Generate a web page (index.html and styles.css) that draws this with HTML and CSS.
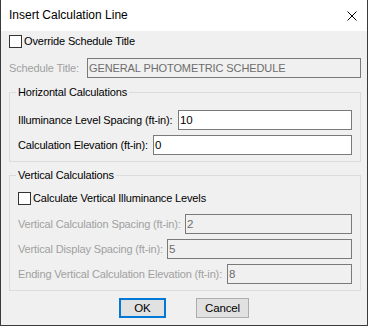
FILE: index.html
```html
<!DOCTYPE html>
<html>
<head>
<meta charset="utf-8">
<link rel="stylesheet" href="styles.css">
</head>
<body>
<div class="window">
  <div class="titlebar">
    <span class="title">Insert Calculation Line</span>
    <svg class="close" width="10" height="10" viewBox="0 0 10 10"><path d="M0.5 0.5 L9.5 9.5 M9.5 0.5 L0.5 9.5" stroke="#000" stroke-width="1" fill="none"/></svg>
  </div>
  <div class="content">
    <div class="check-row first">
      <span class="checkbox"></span>
      <span class="check-label">Override Schedule Title</span>
    </div>
    <div class="field-row title-row">
      <span class="label disabled w-title">Schedule Title:</span>
      <span class="input disabled-input grow">GENERAL PHOTOMETRIC SCHEDULE</span>
    </div>

    <div class="group group-h">
      <span class="legend">Horizontal Calculations</span>
      <div class="field-row">
        <span class="label w-ill">Illuminance Level Spacing (ft-in):</span>
        <span class="input grow">10</span>
      </div>
      <div class="field-row">
        <span class="label w-elev">Calculation Elevation (ft-in):</span>
        <span class="input grow">0</span>
      </div>
    </div>

    <div class="group group-v">
      <span class="legend">Vertical Calculations</span>
      <div class="check-row">
        <span class="checkbox"></span>
        <span class="check-label">Calculate Vertical Illuminance Levels</span>
      </div>
      <div class="field-row">
        <span class="label disabled w-vcs">Vertical Calculation Spacing (ft-in):</span>
        <span class="input disabled-input grow">2</span>
      </div>
      <div class="field-row">
        <span class="label disabled w-vds">Vertical Display Spacing (ft-in):</span>
        <span class="input disabled-input grow">5</span>
      </div>
      <div class="field-row">
        <span class="label disabled w-end">Ending Vertical Calculation Elevation (ft-in):</span>
        <span class="input disabled-input grow">8</span>
      </div>
    </div>

    <div class="buttons">
      <span class="btn btn-default">OK</span>
      <span class="btn">Cancel</span>
    </div>
  </div>
</div>
</body>
</html>
```

FILE: styles.css
```css
html, body {
  margin: 0;
  padding: 0;
  background: #f0f0f0;
}
.window {
  width: 368px;
  height: 326px;
  box-sizing: border-box;
  border-left: 1px solid #3a3a3a;
  border-right: 1px solid #3a3a3a;
  border-bottom: 1px solid #3a3a3a;
  background: #f0f0f0;
  display: flex;
  flex-direction: column;
  font-family: "Liberation Sans", Arial, sans-serif;
  font-size: 11px;
  letter-spacing: -0.15px;
  color: #000;
}
.titlebar {
  height: 31px;
  flex: none;
  background: #fff;
  display: flex;
  align-items: center;
  padding: 0 10px 0 8px;
  justify-content: space-between;
}
.title {
  font-family: "Liberation Sans", Arial, sans-serif;
  font-size: 12px;
  letter-spacing: 0;
  color: #000;
  margin-top: -1px;
}
.close {
  display: block;
}
.content {
  padding: 0 6px 0 8px;
  display: flex;
  flex-direction: column;
}
.check-row {
  display: flex;
  align-items: center;
  height: 13px;
}
.check-row.first {
  margin-top: 4px;
}
.checkbox {
  width: 13px;
  height: 13px;
  box-sizing: border-box;
  border: 1px solid #333;
  background: #fff;
  flex: none;
}
.check-label {
  margin-left: 2px;
  line-height: 13px;
}
.field-row {
  display: flex;
  align-items: center;
  height: 20px;
  margin-top: 5px;
}
.title-row {
  margin-top: 10px;
}
.label {
  white-space: nowrap;
  flex: none;
}
.w-title { width: 78px; }
.w-ill { width: 160px; }
.w-elev { width: 135px; }
.w-vcs { width: 167px; }
.w-vds { width: 149px; }
.w-end { width: 209px; }
.label.disabled {
  color: #a0a0a0;
}
.input {
  height: 20px;
  box-sizing: border-box;
  border: 1px solid #7a7a7a;
  background: #fff;
  padding: 0 1px;
  display: flex;
  align-items: center;
  font-size: 11.5px;
  white-space: nowrap;
}
.disabled-input.grow:first-letter {
  letter-spacing: -0.15px;
}
.grow {
  flex: 1;
}
.disabled-input {
  background: #f0f0f0;
  color: #6d6d6d;
}
.title-row .input {
  font-size: 11px;
  letter-spacing: -0.1px;
}
.group {
  position: relative;
  border: 1px solid #dcdcdc;
  display: flex;
  flex-direction: column;
  padding: 0 8px 0 8px;
}
.legend {
  position: absolute;
  top: -7px;
  left: 6px;
  padding: 0 2px;
  background: #f0f0f0;
  line-height: 13px;
}
.group-h {
  margin-top: 14px;
  height: 70px;
  box-sizing: border-box;
  padding-top: 12px;
}
.group-v {
  margin-top: 13px;
  height: 116px;
  box-sizing: border-box;
  padding-top: 16px;
}
.group-v .check-row + .field-row {
  margin-top: 9px;
}
.buttons {
  display: flex;
  justify-content: center;
  gap: 30px;
  margin-top: 7px;
  padding-right: 2px;
}
.btn {
  width: 53px;
  height: 20px;
  box-sizing: border-box;
  border: 1px solid #adadad;
  background: #e1e1e1;
  display: flex;
  align-items: center;
  justify-content: center;
  font-size: 11.5px;
}
.btn-default {
  width: 47px;
  border: 2px solid #0078d7;
}
```
